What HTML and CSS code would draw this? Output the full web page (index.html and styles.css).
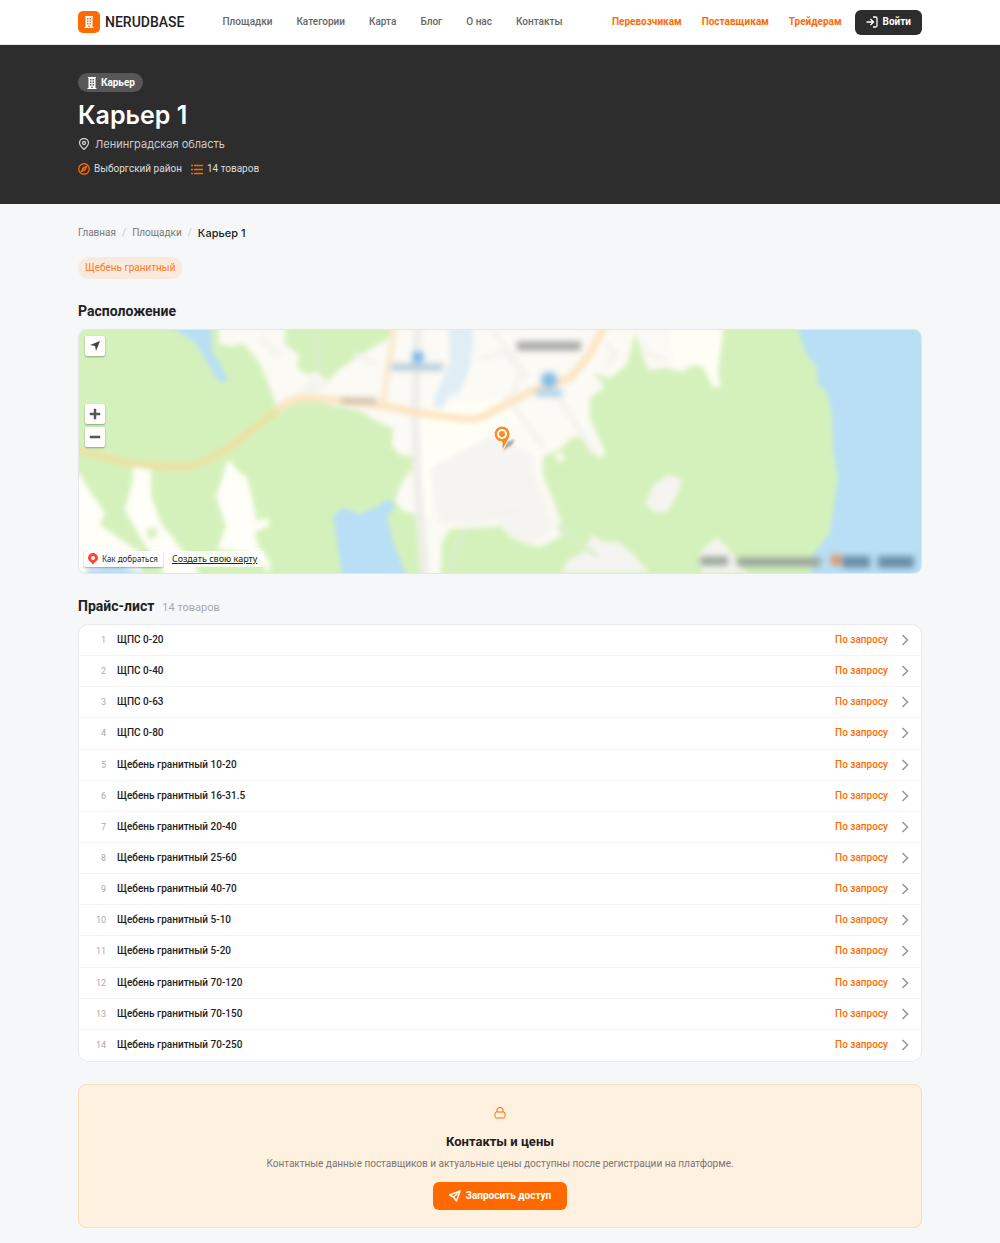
FILE: index.html
```html
<!DOCTYPE html>
<html lang="ru">
<head>
<meta charset="utf-8">
<meta name="viewport" content="width=device-width, initial-scale=1">
<title>Карьер 1 — NERUDBASE</title>
<link rel="stylesheet" href="styles.css">
</head>
<body>
<svg class="sprite" aria-hidden="true">
  <symbol id="building" viewBox="0 0 12 12"><path fill="currentColor" fill-rule="evenodd" d="M2 0h8v1H9.500v10h1v1h-9v-1h1V1H2zM4 2v1.500h1.500V2zM6.500 2v1.500H8V2zM4 4.500V6h1.500V4.500zM6.500 4.500V6H8V4.500zM4 7v1.500h1.500V7zM6.500 7v1.500H8V7zM5.300 9.500V11h1.400V9.500z"/></symbol>
  <symbol id="chevron" viewBox="0 0 8 12"><path d="M1.500 1 6.500 6l-5 5" fill="none" stroke="currentColor" stroke-width="1.600"/></symbol>
</svg>
<header class="topbar">
  <div class="container topbar-inner">
    <a class="logo" href="#"><span class="logo-mark"><svg class="icon-logo"><use href="#building"/></svg></span>NERUDBASE</a>
    <nav class="nav">
      <a href="#">Площадки</a><a href="#">Категории</a><a href="#">Карта</a><a href="#">Блог</a><a href="#">О нас</a><a href="#">Контакты</a>
    </nav>
    <nav class="nav-roles">
      <a href="#">Перевозчикам</a><a href="#">Поставщикам</a><a href="#">Трейдерам</a>
    </nav>
    <button class="login" type="button"><svg class="icon" viewBox="0 0 24 24" fill="none" stroke="currentColor" stroke-width="2.600"><path d="M1 12h14M9 6l6 6-6 6M14 2h5a3 3 0 0 1 3 3v14a3 3 0 0 1-3 3h-5"/></svg>Войти</button>
  </div>
</header>

<section class="hero">
  <div class="container hero-inner">
    <span class="badge"><svg class="icon"><use href="#building"/></svg>Карьер</span>
    <h1>Карьер 1</h1>
    <p class="region"><svg class="icon" viewBox="0 0 24 24" fill="none" stroke="currentColor" stroke-width="2.600"><path d="M12 23C7 18 3 14.500 3 10a9 9 0 0 1 18 0c0 4.500-4 8-9 13z"/><circle cx="12" cy="10" r="3"/></svg>Ленинградская область</p>
    <ul class="facts">
      <li><svg class="icon" viewBox="0 0 24 24" fill="none" stroke="currentColor" stroke-width="2.600"><circle cx="12" cy="12" r="10.500"/><path d="m17 7-3 7-7 3 3-7z"/><path d="m10 10 4 4"/></svg>Выборгский район</li>
      <li><svg class="icon" viewBox="0 0 12 12" fill="none" stroke="currentColor" stroke-width="1.500"><path d="M3 2.500h9M3 6.500h9M3 10.500h9M0 2.500h2M0 6.500h2M0 10.500h2"/></svg>14 товаров</li>
    </ul>
  </div>
</section>

<main class="container">
  <nav class="crumbs"><a href="#">Главная</a><span class="slash">/</span><a href="#">Площадки</a><span class="slash">/</span><span class="current">Карьер 1</span></nav>
  <a class="tag" href="#">Щебень гранитный</a>

  <h2>Расположение</h2>
  <div class="map">
    <svg class="map-canvas" viewBox="0 0 842 243" preserveAspectRatio="xMidYMid slice" aria-hidden="true">
      <defs>
        <filter id="soft" x="-5%" y="-5%" width="110%" height="110%"><feGaussianBlur stdDeviation="2.400"/></filter>
        <filter id="haze" x="-20%" y="-100%" width="140%" height="300%"><feGaussianBlur stdDeviation="3"/></filter>
        <filter id="shade" x="-50%" y="-50%" width="200%" height="200%"><feGaussianBlur stdDeviation="0.800"/></filter>
      </defs>
      <rect width="842" height="243" fill="#d4f1bb"/>
      <g filter="url(#soft)">
        <path fill="#fbfaf4" d="M140-9V14l12 2 13-2 15 18 12 28 6 20 30-10 53 11 20 12 13 5-1 18 8 9 13 1v12l-11 13-7 20 8 10 17 4 3 30 5 40h12l2-43 8-13 57-3 13 16 20 5 20-10 2-11-9-27-10-23v-19l17-8 13-12 14 2 6 13 9 7 3-7-15-33V68l15-11-12-14 17 5 17-13 8-32 13 37 19-2 15 4 15-9 16 5 9 20 8 2 3-7-5-15 5-38V-9z"/>
        <path fill="#fffef6" d="M359 78l65-10 20 20-30 18-60 32-2 48-10 5-3-40-5-70z"/>
        <path fill="#fffef6" d="M592-9h52V0l-5 38 4 20-9-1-10-20-16-6-14 6z"/>
        <path fill="#d4f1bb" d="M206-9v24l14 10-2 13 10 7 10-3 10 10 14-14 28-18 27-16V-9zM645-9h18v80h-20l-4-30z"/>
        <path fill="#fffef8" d="M54 138h18v27l10 28 33 42 10 18H92L64 212l-18-32 8-30zM149 129l12 14 7 4 6 24 4 20 12-3v8l-14 6 2 12 13 18-1 12-14-20-38-5 9-23-10-30 6-17zM0 143l12 20 14 20-5 12 26 18 15 10v25H-9V143z"/>
        <path fill="#f5f4f0" d="M351 138l60-33 43 20v17l10 23 9 27-2 12-20 9-20-6-13-15-57 2-5-20zM182 2l25 25-12-1-16-15zM218 62l16-17 16 10-15 8zM560 2l10 18 24 9-15 3-15-8zM574 156l15-11 14 4-3 12-11 20-13 2-10-9zM505 222l8-17 13 7h14l14 12 16 19H482l8-13zM620 223l18-16 13 14 17 22H623z"/>
        <circle cx="481" cy="127" r="5" fill="#f8f8e9"/><circle cx="73" cy="203" r="6" fill="#d9f2c2"/>
        <path fill="#b8dff6" d="M96-9V0l20 12 8 13 14 24 6 4 5-3-7-15-9-13-1-31zM254 185l10-7 17 6 17-7 8-7 10 2-2 9-6 4 6 27 16 39h-66zM719-9v9l9 25 10 13 1 17 9 7 5 23 1 33 5 30-5 34-3 20-17 23-3 30h130V-9zM10 238l30-3 25 9v10H0z"/>
        <path fill="#dfeef5" d="M369-9h25V15l-3 23-10 24-12 5-6 12-8-3 1-10 15-35z"/>
        <g fill="none" stroke="#f4f3ef" stroke-width="6"><path d="M339-9l-3 81 2 73 8 100" stroke="#efeeea" stroke-width="9"/><path d="M413 0l30 40-10 26M425 65l40 52M451 62l20-8 45 70M400 30l24-8 25 25M360 188h40l45-10M276 25l22 10M527 14l10 10-10 14"/></g>
        <path d="M233 2q12 22 4 40M478 196l40 30M384 198l-13 45" fill="none" stroke="#daeeca" stroke-width="5"/>
        <path d="M316-5 304 73" fill="none" stroke="#fcebd2" stroke-width="7"/>
        <path d="M-5 120 51 133q35 5 57 4 22-6 43-20l47-37q14-14 38-12 75 7 102 15l50 6q12 0 21-5l42-22 40-14 20-24L526-6" fill="none" stroke="#fce6c3" stroke-width="8"/>
        <path d="M-5 120 51 133q35 5 57 4 22-6 43-20l47-37" fill="none" stroke="#e9e3a5" stroke-width="8"/>
      </g>
      <g filter="url(#haze)">
        <path d="M438 16h64" stroke="#a8a8a5" stroke-width="9"/><path d="M312 37h52" stroke="#b4cbda" stroke-width="7"/><path d="M457 63h26" stroke="#afcfe5" stroke-width="7"/><path d="M262 71h35" stroke="#c3b8a7" stroke-width="5"/>
        <circle cx="339" cy="27" r="6" fill="#78b8ea"/><circle cx="470" cy="50" r="8" fill="#82bdeb"/>
        <path d="M621 231h28M658 232h84" stroke="#9aa59a" stroke-width="9"/><path d="M763 232h28M799 232h36" stroke="#6b8ea8" stroke-width="12"/><circle cx="757" cy="230" r="6" fill="#dd9a6c"/>
      </g>
      <path d="M423 121l5-9 8-3-3 6z" fill="#777" opacity=".6" filter="url(#shade)"/>
      <path d="M423 121v-9a8 8 0 1 1 7-4q-3 6-7 13z" fill="#ff8a1f" stroke="#fff"/><circle cx="423" cy="104" r="5" fill="#fff"/><circle cx="423" cy="104" r="3" fill="#ff8a1f"/>
    </svg>
    <div class="map-tools">
      <button class="tool" type="button" aria-label="Моё местоположение"><svg class="icon" viewBox="0 0 12 12"><path fill="#444" d="M11 1 7 11 6 6 1 5z"/></svg></button>
      <div class="zoom">
        <button class="tool" type="button" aria-label="Приблизить"><svg class="icon" viewBox="0 0 12 12"><path fill="#555" d="M5 1h2v4h4v2H7v4H5V7H1V5h4z" stroke="#555" stroke-width=".5"/></svg></button>
        <button class="tool" type="button" aria-label="Отдалить"><svg class="icon" viewBox="0 0 12 12"><path fill="#555" d="M1 5h10v2H1z" stroke="#555" stroke-width=".5"/></svg></button>
      </div>
      <div class="map-links">
        <a class="route" href="#"><svg class="icon" viewBox="0 0 12 12"><path fill="#f43" fill-rule="evenodd" d="M6 0a5 5 0 0 1 5 5c0 3-4 4-5 7-1-3-5-4-5-7a5 5 0 0 1 5-5zm0 3a2 2 0 1 0 0 4 2 2 0 0 0 0-4z"/></svg>Как добраться</a>
        <a class="own-map" href="#">Создать свою карту</a>
      </div>
    </div>
  </div>

  <div class="list-head"><h2>Прайс-лист</h2><span>14 товаров</span></div>
  <ol class="prices">
    <li><a href="#"><span class="num">1</span><span class="name">ЩПС 0-20</span><span class="price">По запросу</span><svg class="chev"><use href="#chevron"/></svg></a></li>
    <li><a href="#"><span class="num">2</span><span class="name">ЩПС 0-40</span><span class="price">По запросу</span><svg class="chev"><use href="#chevron"/></svg></a></li>
    <li><a href="#"><span class="num">3</span><span class="name">ЩПС 0-63</span><span class="price">По запросу</span><svg class="chev"><use href="#chevron"/></svg></a></li>
    <li><a href="#"><span class="num">4</span><span class="name">ЩПС 0-80</span><span class="price">По запросу</span><svg class="chev"><use href="#chevron"/></svg></a></li>
    <li><a href="#"><span class="num">5</span><span class="name">Щебень гранитный 10-20</span><span class="price">По запросу</span><svg class="chev"><use href="#chevron"/></svg></a></li>
    <li><a href="#"><span class="num">6</span><span class="name">Щебень гранитный 16-31.5</span><span class="price">По запросу</span><svg class="chev"><use href="#chevron"/></svg></a></li>
    <li><a href="#"><span class="num">7</span><span class="name">Щебень гранитный 20-40</span><span class="price">По запросу</span><svg class="chev"><use href="#chevron"/></svg></a></li>
    <li><a href="#"><span class="num">8</span><span class="name">Щебень гранитный 25-60</span><span class="price">По запросу</span><svg class="chev"><use href="#chevron"/></svg></a></li>
    <li><a href="#"><span class="num">9</span><span class="name">Щебень гранитный 40-70</span><span class="price">По запросу</span><svg class="chev"><use href="#chevron"/></svg></a></li>
    <li><a href="#"><span class="num">10</span><span class="name">Щебень гранитный 5-10</span><span class="price">По запросу</span><svg class="chev"><use href="#chevron"/></svg></a></li>
    <li><a href="#"><span class="num">11</span><span class="name">Щебень гранитный 5-20</span><span class="price">По запросу</span><svg class="chev"><use href="#chevron"/></svg></a></li>
    <li><a href="#"><span class="num">12</span><span class="name">Щебень гранитный 70-120</span><span class="price">По запросу</span><svg class="chev"><use href="#chevron"/></svg></a></li>
    <li><a href="#"><span class="num">13</span><span class="name">Щебень гранитный 70-150</span><span class="price">По запросу</span><svg class="chev"><use href="#chevron"/></svg></a></li>
    <li><a href="#"><span class="num">14</span><span class="name">Щебень гранитный 70-250</span><span class="price">По запросу</span><svg class="chev"><use href="#chevron"/></svg></a></li>
  </ol>

  <section class="cta">
    <svg class="icon lock" viewBox="0 0 24 24" fill="none" stroke="currentColor" stroke-width="2"><rect x="2" y="10" width="20" height="12" rx="3"/><path d="M6 10V6a6 5 0 0 1 12 0v4"/></svg>
    <h2>Контакты и цены</h2>
    <p>Контактные данные поставщиков и актуальные цены доступны после регистрации на платформе.</p>
    <button class="request" type="button"><svg class="icon" viewBox="0 0 24 24" fill="none" stroke="currentColor" stroke-width="2.800" stroke-linejoin="round"><path d="M22 2 1 10l8 4 6 8zM9 14l8-7"/></svg>Запросить доступ</button>
  </section>
</main>
</body>
</html>
```
FILE: styles.css
```css
* { box-sizing: border-box; }
body { margin: 0; background: #f6f7f9; color: #222; font: 10px/16px Roboto, "Liberation Sans", sans-serif; }
h1, h2, p, ul, ol { margin: 0; padding: 0; }
ul, ol { list-style: none; }
a { color: inherit; text-decoration: none; }
button { border: 0; font: inherit; color: inherit; padding: 0; }
svg { display: block; flex: none; }
.sprite { display: none; }
.icon { width: 12px; height: 12px; }
.container { width: 100%; max-width: 876px; margin: 0 auto; padding: 0 16px; }

.topbar { background: #fff; border-bottom: 1px solid #e6e8ea; }
.topbar-inner { display: flex; align-items: center; height: 44px; }
.logo { display: flex; align-items: center; gap: 5px; font-size: 14px; font-weight: 500; }
.logo-mark { display: grid; place-items: center; width: 22px; height: 22px; border-radius: 5px; background: #ff6a00; color: #fff; }
.icon-logo { width: 12px; height: 12px; }
.nav { display: flex; gap: 24px; margin: 0 auto 0 38px; color: #666; font-weight: 500; }
.nav-roles { display: flex; gap: 20px; color: #ff6a00; font-weight: 700; }
.login { display: flex; align-items: center; gap: 5px; height: 25px; margin-left: 13px; padding: 0 11px; border-radius: 6px; background: #2d2d2d; color: #fff; font-weight: 700; }

.hero { background: #2d2d2d; color: #ddd; }
.hero-inner { display: flex; flex-direction: column; align-items: flex-start; padding-top: 28px; padding-bottom: 27px; }
.badge { display: flex; align-items: center; gap: 3px; height: 19px; padding: 0 8px; border-radius: 10px; background: #575757; color: #fff; font-weight: 700; }
h1 { margin-top: 7px; color: #fff; font: 600 25px/32px Inter, Roboto, sans-serif; }
.region { display: flex; align-items: center; gap: 5px; margin-top: 5px; color: #ccc; font: 11px/16px Inter, Roboto, sans-serif; }
.facts { display: flex; gap: 9px; margin-top: 9px; }
.facts li { display: flex; align-items: center; gap: 4px; }
.facts .icon { color: #ff6a00; }

.crumbs { display: flex; align-items: center; gap: 6px; margin-top: 21px; color: #777; }
.slash { color: #c8cbce; }
.current { color: #222; font: 500 11px/16px Inter, Roboto, sans-serif; }
.tag { display: inline-block; margin-top: 16px; padding: 3px 7px; border-radius: 11px; background: #fae9dd; color: #ff7a1a; }
h2 { font-size: 14px; line-height: 20px; font-weight: 700; }
.tag + h2 { margin-top: 22px; }

.map { display: grid; height: 245px; margin-top: 8px; border: 1px solid #e3e6e8; border-radius: 8px; overflow: hidden; }
.map-canvas, .map-tools { grid-area: 1 / 1; min-width: 0; min-height: 0; }
.map-canvas { width: 100%; height: 243px; }
.map-tools { z-index: 1; display: flex; flex-direction: column; align-items: flex-start; padding: 6px 5px; }
.tool { display: grid; place-items: center; width: 20px; height: 20px; margin-left: 1px; border-radius: 2px; background: #fff; box-shadow: 0 1px 2px #0005; }
.zoom { display: grid; gap: 3px; margin-top: 48px; }
.map-links { display: flex; align-items: center; gap: 2px; margin-top: auto; font: 9px/16px "Noto Sans", sans-serif; }
.route { display: flex; align-items: center; gap: 3px; height: 16px; padding: 0 5px 0 3px; border-radius: 2px; background: #fff; box-shadow: 0 1px 2px #0005; font-size: 8px; }
.own-map { padding: 0 7px; background: #fffc; text-decoration: underline; }

.list-head { display: flex; align-items: baseline; gap: 8px; margin-top: 22px; }
.list-head span { color: #aaa; font-size: 11px; }
.prices { display: grid; grid-auto-rows: 1fr; min-height: 438px; margin-top: 8px; border: 1px solid #e8eaec; border-radius: 10px; background: #fff; }
.prices li { display: grid; border-bottom: 1px solid #f2f3f4; }
.prices li:last-child { border-bottom: 0; }
.prices a { display: flex; align-items: center; padding: 0 12px; }
.num { width: 15px; color: #aaa; font-size: 9px; text-align: right; }
.name { flex: 1; margin-left: 11px; font-weight: 500; }
.price { color: #ff6a00; font-weight: 500; }
.chev { width: 8px; height: 12px; margin-left: 13px; color: #999; }

.cta { display: flex; flex-direction: column; align-items: center; margin: 22px 0 16px; padding: 22px 16px 17px; border: 1px solid #fddcb8; border-radius: 8px; background: #fff1df; }
.lock { color: #ff6a00; }
.cta h2 { margin-top: 13px; font-size: 13px; }
.cta p { margin-top: 4px; color: #777; text-align: center; }
.request { display: flex; align-items: center; gap: 5px; height: 28px; margin-top: 10px; padding: 0 16px; border-radius: 6px; background: #ff6a00; color: #fff; font-weight: 700; }
```
